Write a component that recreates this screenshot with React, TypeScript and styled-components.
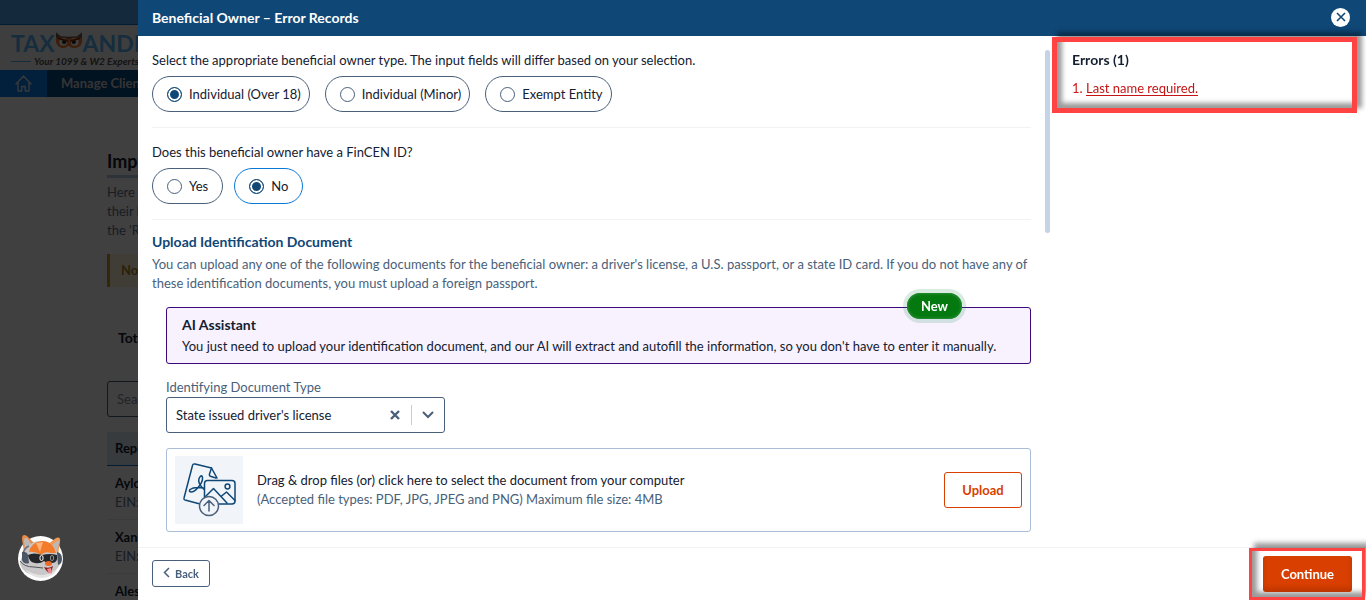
import React, { useState } from "react";
import styled, { createGlobalStyle } from "styled-components";

const color = {
  navy: "#0f4777",
  slate: "#4a5f7a",
  ink: "#14202f",
  line: "#f1f2f4",
  orange: "#d83f00",
  mark: "#ff4242",
};

const GlobalStyle = createGlobalStyle`
  * { box-sizing: border-box; }
  html, body, #root { height: 100%; }
  body {
    margin: 0;
    background: #fff;
    color: ${color.ink};
    font: 400 13px/19px Lato, "Liberation Sans", sans-serif;
    overflow: hidden;
  }
  h1, h2, h3, p, ol, fieldset, legend { margin: 0; padding: 0; border: 0; font-size: inherit; }
  button, input, select { font: inherit; color: inherit; }
`;

/* ---------- page behind the dialog ---------- */

const Page = styled.div`
  height: 100%;
  overflow: hidden;
`;

const TopBar = styled.div`
  height: 25px;
  background: #50a8f0;
  border-bottom: 1px solid #0a6fd0;
`;

const LogoRow = styled.header`
  height: 45px;
  padding: 5px 0 0 11px;
  background: #f7f7f7;
`;

const Logo = styled.div`
  display: flex;
  align-items: center;
  height: 26px;
  color: #58b4f8;
  font-size: 23px;
  font-weight: 700;
  svg { margin-bottom: 4px; flex: none; }
`;

const Tagline = styled.p`
  display: flex;
  align-items: center;
  gap: 3px;
  height: 10px;
  font-size: 10px;
  font-style: italic;
  font-weight: 700;
  line-height: 10px;
  white-space: nowrap;
  color: #505050;
  &::before { content: ""; width: 20px; height: 1px; background: #58b4f8; }
`;

const Nav = styled.nav`
  display: flex;
  height: 27px;
  background: #064884;
  color: #fff;
  font-weight: 700;
`;

const NavHome = styled.a`
  display: flex;
  align-items: center;
  justify-content: center;
  width: 47px;
  background: #0880f0;
  color: #e0e0e0;
`;

const NavLink = styled.a`
  padding: 0 14px;
  line-height: 27px;
  color: #d0d0d0;
  text-decoration: none;
`;

const Main = styled.main`
  padding: 52px 107px 0;
  color: #64748b;
`;

const PageTitle = styled.h1`
  color: #14202f;
  font-size: 18px;
  line-height: 24px;
  &::after { content: ""; display: block; width: 50px; height: 3px; margin-top: 2px; background: #b4cce0; }
`;

const Intro = styled.p`
  width: 480px;
  margin-top: 5px;
`;

const Note = styled.div`
  width: 480px;
  margin-top: 14px;
  padding: 7px 11px;
  border-left: 3px solid #d09a20;
  background: #fdf3da;
  color: #b08020;
  font-weight: 700;
`;

const Totals = styled.h2`
  margin-top: 30px;
  padding: 11px;
  color: #14202f;
  font-size: 14px;
`;

const Search = styled.input`
  display: block;
  width: 279px;
  height: 36px;
  margin-top: 23px;
  padding: 0 9px;
  border: 1px solid ${color.slate};
  border-radius: 3px;
  background: #fff;
  &::placeholder { color: #8090a4; }
`;

const Table = styled.table`
  width: 100%;
  margin-top: 15px;
  border-collapse: collapse;
  th { height: 33px; padding: 0 8px; text-align: left; color: #14202f; background: #dcebf8; border-bottom: 1px solid #0a6fd0; }
  td { height: 54px; padding: 8px 8px 7px; border-bottom: 1px solid #ececec; vertical-align: top; }
  strong { display: block; color: #14202f; }
`;

const Backdrop = styled.div`
  position: fixed;
  inset: 0;
  padding-left: 138px;
  background: rgba(0, 0, 0, 0.75);
`;

const Mascot = styled.button`
  position: fixed;
  left: 16px;
  bottom: 17px;
  width: 50px;
  height: 50px;
  padding: 0;
  border: 0;
  background: none;
  svg { display: block; }
`;

/* ---------- dialog ---------- */

const Dialog = styled.section`
  display: flex;
  flex-direction: column;
  height: 100%;
  background: #fff;
`;

const DialogHeader = styled.header`
  display: flex;
  align-items: center;
  justify-content: space-between;
  flex: none;
  height: 36px;
  padding: 0 16px 2px 14px;
  background: ${color.navy};
  color: #fff;
  h1 { font-size: 14px; font-weight: 700; }
`;

const CloseButton = styled.button`
  display: grid;
  place-items: center;
  width: 19px;
  height: 19px;
  padding: 0;
  border: 0;
  border-radius: 50%;
  background: #fff;
  color: ${color.navy};
`;

const Body = styled.div`
  display: flex;
  flex: 1;
  min-height: 0;
`;

const FormColumn = styled.form`
  flex: 1;
  min-width: 0;
  padding: 15px 14px 0;
  overflow: hidden;
`;

const ScrollThumb = styled.div`
  flex: none;
  width: 5px;
  height: 183px;
  margin: 14px 2px 0 0;
  border-radius: 3px;
  background: #c5d3e6;
`;

const Question = styled.fieldset`
  padding-bottom: 15px;
  margin-bottom: 15px;
  border-bottom: 1px solid ${color.line};
  min-width: 0;
`;

const Pills = styled.div<{ $gap: number }>`
  display: flex;
  gap: ${(p) => p.$gap}px;
  margin-top: 6px;
`;

const Pill = styled.label<{ $active?: boolean; $end: number }>`
  display: flex;
  align-items: center;
  gap: 7px;
  height: 36px;
  padding: 0 ${(p) => p.$end}px 0 14px;
  border: 1px solid ${(p) => (p.$active ? "#0a78d6" : color.slate)};
  border-radius: 18px;
`;

const Radio = styled.input`
  appearance: none;
  width: 15px;
  height: 15px;
  margin: 0;
  border: 1px solid ${color.slate};
  border-radius: 50%;
  background: #fff;
  &:checked {
    border-color: ${color.navy};
    background: ${color.navy};
    box-shadow: inset 0 0 0 2px #fff;
  }
`;

const SectionTitle = styled.h2`
  color: ${color.navy};
  font-size: 14px;
  font-weight: 700;
  line-height: 14px;
  margin-bottom: 6px;
`;

const Muted = styled.p`
  color: ${color.slate};
`;

const Intake = styled.div`
  padding-left: 14px;
`;

const Assistant = styled.div`
  position: relative;
  height: 57px;
  margin-top: 14px;
  padding: 7px 15px;
  border: 1px solid #3c0a78;
  border-radius: 3px;
  background: #f8f2ff;
  h3 { font-size: 14px; font-weight: 700; }
  p { margin-top: 3px; }
`;

const NewBadge = styled.span`
  position: absolute;
  top: -15px;
  right: 68px;
  padding: 0 14px;
  border-radius: 13px;
  background: #04790f;
  box-shadow: inset 0 0 3px 1px #2a8f38, 0 0 0 4px rgba(20, 130, 70, 0.16);
  color: #fff;
  font-weight: 700;
  line-height: 26px;
`;

const FieldLabel = styled.label`
  display: block;
  margin-top: 14px;
  color: ${color.slate};
`;

const SelectBox = styled.div`
  display: flex;
  align-items: center;
  width: 279px;
  height: 36px;
  border: 1px solid ${color.slate};
  border-radius: 3px;
  color: ${color.slate};
`;

const Select = styled.select`
  flex: 1;
  min-width: 0;
  height: 34px;
  padding: 0 9px;
  border: 0;
  background: none;
  color: ${color.ink};
  appearance: none;
`;

const IconButton = styled.button`
  display: grid;
  place-items: center;
  width: 33px;
  height: 20px;
  padding: 0;
  border: 0;
  background: none;
  & + & { border-left: 1px solid #ccc; }
`;

const DropZone = styled.div`
  display: flex;
  align-items: center;
  gap: 14px;
  height: 84px;
  margin-top: 15px;
  padding: 7px 8px;
  border: 1px solid #a9bdd8;
  border-radius: 3px;
`;

const DropIcon = styled.div`
  flex: none;
  width: 68px;
  height: 68px;
  background: #f1f5fa;
  svg { display: block; }
`;

const DropText = styled.div`
  flex: 1;
`;

const UploadButton = styled.button`
  width: 78px;
  height: 36px;
  border: 1px solid ${color.orange};
  border-radius: 3px;
  background: #fff;
  color: ${color.orange};
  font-weight: 700;
`;

/* Callout frame whose shadow falls up and to the right, on both sides of the stroke. */
const Callout = styled.div<{ $stroke: number }>`
  border: ${(p) => p.$stroke}px solid ${color.mark};
  box-shadow: 5px -5px 5px rgba(0, 0, 0, 0.4), inset 5px -5px 5px rgba(0, 0, 0, 0.4);
`;

const Errors = styled(Callout)`
  flex: none;
  align-self: flex-start;
  width: 305px;
  height: 76px;
  margin: 1px 9px 0 0;
  padding: 8px 15px;
  h2 { font-size: 14px; font-weight: 700; }
`;

const ErrorList = styled.ol`
  margin-top: 10px;
  padding-left: 14px;
  color: #d01616;
  li::marker { content: "1. "; }
  a { color: #c41414; text-decoration: underline; text-underline-offset: 2px; }
`;

const Footer = styled.footer`
  display: flex;
  align-items: flex-start;
  justify-content: space-between;
  flex: none;
  height: 53px;
  padding-left: 14px;
  border-top: 1px solid ${color.line};
`;

const BackButton = styled.button`
  display: flex;
  align-items: center;
  justify-content: center;
  gap: 5px;
  width: 58px;
  height: 27px;
  margin-top: 12px;
  padding: 0;
  border: 1px solid ${color.slate};
  border-radius: 3px;
  background: #fff;
  color: ${color.slate};
  font-size: 11px;
  font-weight: 700;
  svg { margin-bottom: 2px; }
`;

const ContinueFrame = styled(Callout)`
  height: 52px;
  margin-right: 1px;
  padding: 5px 10px 0 11px;
`;

const ContinueButton = styled.button`
  display: block;
  width: 89px;
  height: 36px;
  border: 0;
  border-radius: 3px;
  background: ${color.orange};
  box-shadow: inset 0 -4px 4px rgba(80, 20, 0, 0.2);
  color: #fff;
  font-weight: 700;
`;

/* ---------- drawings ---------- */

const Owl = () => (
  <svg width="28" height="18" viewBox="0 0 29 18" aria-hidden="true">
    <path d="M1 0l5 4q8 1 17 0l5-4v9H1z" fill="#705850" />
    <path d="M1 6q7-2 13 1 7-3 14-1 1 9-6 10-5 1-8-2-3 3-8 2-6-2-5-10z" fill="#f07828" />
    <circle cx="8.500" cy="10" r="4" fill="#fff" />
    <circle cx="20.500" cy="10" r="4" fill="#fff" />
    <circle cx="9.500" cy="10" r="2.200" fill="#222" />
    <circle cx="19.500" cy="10" r="2.200" fill="#222" />
    <path d="M3 6l10 3M26 6L16 9" stroke="#803010" strokeWidth="2" />
  </svg>
);

const HomeIcon = () => (
  <svg width="17" height="17" viewBox="0 0 17 17" fill="none" stroke="currentColor" strokeWidth="1.400" strokeLinejoin="round" strokeLinecap="round" aria-hidden="true">
    <path d="M1 9l7.500-8L16 9M3 7.500V16h3.700v-4.500h3.600V16H14V7.500" />
  </svg>
);

const MascotArt = () => (
  <svg width="50" height="50" viewBox="0 0 50 50" aria-hidden="true">
    <circle cx="24.500" cy="25.500" r="22.500" fill="#fdfdfd" />
    <path d="M8 19L6 6q0-6 5-3l9 9z" fill="#eb8a45" />
    <path d="M9 18L8 7q1-4 4-1l5 8z" fill="#bdb8b6" />
    <path d="M31 12l9-7q5-2 4 4l-2 13z" fill="#f09a55" />
    <path d="M35 13l6-5q2-1 2 2l-2 9z" fill="#bdb8b6" />
    <path d="M10 17q4-9 15-9 12 0 16 12l3 10q-3 11-19 13Q8 43 4 31q0-5 6-14z" fill="#c9c7c7" />
    <path d="M13 19q2-10 13-11 11 0 14 12l-5 0q-7-2-10 2-6-4-12-3z" fill="#f27c2b" />
    <path d="M20 10l4 9 3-10z" fill="#ffb27a" />
    <path d="M7 21q1-6 6-8" fill="none" stroke="#6a727e" strokeWidth="1.500" />
    <path d="M6 19q4-1 6 3l1 8q-5 2-7-3z" fill="#4c5664" />
    <path d="M41 19q5 1 5 7 0 5-4 6z" fill="#4a5564" />
    <path d="M12 22q6-3 14 0 8-2 15 0 1 8-5 8-5 1-8-2-4 3-9 2-6-1-7-8z" fill="#25262a" />
    <rect x="24" y="22.500" width="3" height="5" rx="1.500" fill="none" stroke="#fff" />
    <rect x="34.500" y="22.500" width="3" height="5" rx="1.500" fill="none" stroke="#8a8d92" />
    <path d="M4 28q4 6 14 6l9 1" fill="none" stroke="#55565c" />
    <path d="M10 37q8 5 17 5 9-1 14-6-3 8-15 9-11-1-16-8z" fill="#e4e2e2" />
    <path d="M28 34q5 2 9-1l-2 7q-4 0-7-6z" fill="#8d1f20" />
    <path d="M31 36l4-1 1 5q-3 2-5-4z" fill="#f08a8f" />
    <ellipse cx="32.500" cy="30.500" rx="3.500" ry="2.500" fill="#ec6a28" />
  </svg>
);

const UploadArt = () => (
  <svg width="68" height="68" viewBox="5 6 68 68" fill="none" stroke="#0f4777" strokeWidth="1.500" strokeLinecap="round" strokeLinejoin="round" aria-hidden="true">
    <path d="M30 54l-15-4q-1.500-.5-1-2l8.500-32.500q.5-2 2.500-1.500l16.500 4 5.500 10" />
    <path d="M41.500 18l-2 6q-.5 2 1.500 2.500l5 1.500" />
    <path d="M33.500 39q-6-6-4.500-10.500 2.500-5 3.500-1 .5 4-4 9.500-4 5-7.500 5-2.500-.5-1-2.500 4-3 13.500-1.500" />
    <rect x="34.500" y="30.500" width="30.500" height="23.500" rx="3" fill="#f1f5fa" />
    <circle cx="57.500" cy="36.500" r="2.400" />
    <path d="M35 47l8.500-8.500L57 53M51 46.500l5.500-4.500L65 50.500" />
    <circle cx="39" cy="56" r="9.500" fill="#f1f5fa" stroke="#4a5f7a" />
    <path d="M39 61V51M34 55.500l5-5 5 5" stroke="#4a5f7a" />
  </svg>
);

const Cross = ({ size, stroke }: { size: number; stroke: number }) => (
  <svg width={size} height={size} viewBox="0 0 10 10" stroke="currentColor" strokeWidth={stroke} aria-hidden="true">
    <path d="M1 1l8 8M9 1l-8 8" />
  </svg>
);

/* ---------- view ---------- */

type Option = { id: string; label: string };

const ownerTypes: Option[] = [
  { id: "adult", label: "Individual (Over 18)" },
  { id: "minor", label: "Individual (Minor)" },
  { id: "exempt", label: "Exempt Entity" },
];

const yesNo: Option[] = [
  { id: "yes", label: "Yes" },
  { id: "no", label: "No" },
];

const companies = [
  { name: "Aylo Group", detail: "EIN:" },
  { name: "Xander Inc", detail: "EIN:" },
  { name: "Alesia LLC" },
];

type ChoiceProps = { name: string; title: string; options: Option[]; initial: string; gap: number; end: number; accent?: boolean };

function Choice({ name, title, options, initial, gap, end, accent }: ChoiceProps) {
  const [value, setValue] = useState(initial);
  return (
    <Question>
      <legend>{title}</legend>
      <Pills $gap={gap}>
        {options.map((o) => (
          <Pill key={o.id} $end={end} $active={accent && value === o.id}>
            <Radio type="radio" name={name} checked={value === o.id} onChange={() => setValue(o.id)} />
            {o.label}
          </Pill>
        ))}
      </Pills>
    </Question>
  );
}

export default function App() {
  return (
    <>
      <GlobalStyle />
      <Page>
        <TopBar />
        <LogoRow>
          <Logo>TAX<Owl />ANDITS</Logo>
          <Tagline>Your 1099 &amp; W2 Experts</Tagline>
        </LogoRow>
        <Nav>
          <NavHome href="#home" aria-label="Home"><HomeIcon /></NavHome>
          <NavLink href="#clients">Manage Clients</NavLink>
        </Nav>
        <Main>
          <PageTitle>Import</PageTitle>
          <Intro>Here is<br />their beneficial<br />the 'Review</Intro>
          <Note>Note</Note>
          <Totals>Total</Totals>
          <Search placeholder="Search" aria-label="Search" />
          <Table>
            <thead><tr><th>Reporting</th></tr></thead>
            <tbody>
              {companies.map((c) => (
                <tr key={c.name}><td><strong>{c.name}</strong>{c.detail}</td></tr>
              ))}
            </tbody>
          </Table>
        </Main>
      </Page>

      <Backdrop>
        <Dialog role="dialog" aria-labelledby="dialog-title">
          <DialogHeader>
            <h1 id="dialog-title">Beneficial Owner – Error Records</h1>
            <CloseButton aria-label="Close"><Cross size={10} stroke={1.6} /></CloseButton>
          </DialogHeader>
          <Body>
            <FormColumn>
              <Choice
                name="owner"
                title="Select the appropriate beneficial owner type. The input fields will differ based on your selection."
                options={ownerTypes}
                initial="adult"
                gap={15}
                end={8}
              />
              <Choice name="fincen" title="Does this beneficial owner have a FinCEN ID?" options={yesNo} initial="no" gap={11} end={14} accent />
              <SectionTitle>Upload Identification Document</SectionTitle>
              <Muted>
                You can upload any one of the following documents for the beneficial owner: a driver's license, a U.S. passport, or a state ID card. If you do not have any of
                these identification documents, you must upload a foreign passport.
              </Muted>
              <Intake>
                <Assistant>
                  <NewBadge>New</NewBadge>
                  <h3>AI Assistant</h3>
                  <p>You just need to upload your identification document, and our AI will extract and autofill the information, so you don't have to enter it manually.</p>
                </Assistant>
                <FieldLabel htmlFor="doc-type">Identifying Document Type</FieldLabel>
                <SelectBox>
                  <Select id="doc-type">
                    <option>State issued driver's license</option>
                  </Select>
                  <IconButton type="button" aria-label="Clear"><Cross size={10} stroke={2.4} /></IconButton>
                  <IconButton type="button" aria-label="Open list">
                    <svg width="12" height="8" viewBox="0 0 12 8" fill="none" stroke="currentColor" strokeWidth="2" strokeLinecap="round" aria-hidden="true">
                      <path d="M1.500 1.500L6 6l4.500-4.500" />
                    </svg>
                  </IconButton>
                </SelectBox>
                <DropZone>
                  <DropIcon><UploadArt /></DropIcon>
                  <DropText>
                    <p>Drag &amp; drop files (or) click here to select the document from your computer</p>
                    <Muted>(Accepted file types: PDF, JPG, JPEG and PNG) Maximum file size: 4MB</Muted>
                  </DropText>
                  <UploadButton type="button">Upload</UploadButton>
                </DropZone>
              </Intake>
            </FormColumn>
            <ScrollThumb />
            <Errors $stroke={5}>
              <h2>Errors (1)</h2>
              <ErrorList>
                <li><a href="#last-name">Last name required.</a></li>
              </ErrorList>
            </Errors>
          </Body>
          <Footer>
            <BackButton type="button">
              <svg width="7" height="11" viewBox="0 0 7 11" fill="none" stroke="currentColor" strokeWidth="1.500" aria-hidden="true">
                <path d="M6 1L1.500 5.500 6 10" />
              </svg>
              Back
            </BackButton>
            <ContinueFrame $stroke={3}>
              <ContinueButton type="button">Continue</ContinueButton>
            </ContinueFrame>
          </Footer>
        </Dialog>
      </Backdrop>
      <Mascot aria-label="Chat"><MascotArt /></Mascot>
    </>
  );
}
